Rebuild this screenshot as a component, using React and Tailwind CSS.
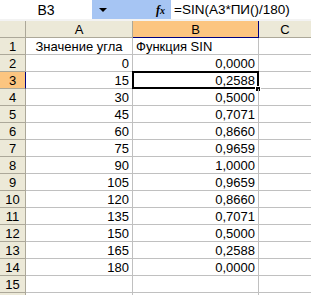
import React from "react";

const rows = [
  ["Значение угла", "Функция SIN", "text"],
  ["0", "0,0000"],
  ["15", "0,2588"],
  ["30", "0,5000"],
  ["45", "0,7071"],
  ["60", "0,8660"],
  ["75", "0,9659"],
  ["90", "1,0000"],
  ["105", "0,9659"],
  ["120", "0,8660"],
  ["135", "0,7071"],
  ["150", "0,5000"],
  ["165", "0,2588"],
  ["180", "0,0000"],
  ["", ""],
];

export default function App() {
  return (
    <div
      className="w-[311px] h-[295px] overflow-hidden bg-white text-[13px] leading-none text-black"
      style={{ fontFamily: '"Liberation Sans", Arial, sans-serif' }}
    >
      {/* FORMULA BAR */}
      <div className="flex h-[19px]">
        <div className="w-[92px] bg-white flex items-center justify-center text-[14px]">B3</div>
        <div className="w-[79px] bg-[#a6c5f3] flex items-center">
          <span className="ml-[7px] w-0 h-0 border-l-[4px] border-r-[4px] border-t-[4px] border-l-transparent border-r-transparent border-t-black" />
          <span className="ml-auto mr-[6px] italic font-bold text-[12px]" style={{ fontFamily: '"Liberation Serif", serif' }}>
            f<span className="text-[10px]">x</span>
          </span>
        </div>
        <div className="flex-1 bg-white flex items-center pl-[3px] text-[13.5px]">=SIN(A3*ПИ()/180)</div>
      </div>
      <div className="h-[2px] bg-[#f3f3f3]" />

      {/* COLUMN HEADERS */}
      <div className="flex h-[17px] border-b border-[#aca899]">
        <div className="w-[26px] bg-[#ece9d8] border-r border-[#aca899]" />
        <div className="w-[107px] bg-[#ece9d8] border-r border-[#aca899] flex items-center justify-center">A</div>
        <div className="w-[126px] bg-[#fcc580] border-r border-[#000080] border-b border-b-[#000080] -mb-px flex items-center justify-center">B</div>
        <div className="flex-1 bg-[#ece9d8] flex items-center justify-center">C</div>
      </div>

      {/* ROWS */}
      {rows.map((r, i) => {
        const sel = i === 2;
        return (
          <div key={i} className="flex h-[17px]">
            <div
              className={
                "w-[26px] border-b border-[#aca899] flex items-center justify-center " +
                (sel ? "bg-[#fcc580] border-r border-r-[#000080]" : "bg-[#ece9d8] border-r border-r-[#aca899]")
              }
            >
              {i + 1}
            </div>
            <div
              className={
                "w-[107px] border-r border-b border-[#c0c0c0] flex items-center px-[3px] " +
                (r[2] ? "justify-center" : "justify-end")
              }
            >
              {r[0]}
            </div>
            <div
              className={
                "relative w-[126px] border-r border-b border-[#c0c0c0] flex items-center px-[3px] " +
                (r[2] ? "justify-start" : "justify-end")
              }
            >
              {r[1]}
              {sel && (
                <>
                  <div className="absolute -left-[1px] -top-[1px] -right-[1px] -bottom-[1px] border-2 border-black" />
                  <div className="absolute -right-[3px] -bottom-[4px] w-[6px] h-[6px] bg-black border border-white" />
                </>
              )}
            </div>
            <div className="flex-1 border-b border-[#c0c0c0]" />
          </div>
        );
      })}
      {/* partial next row */}
      <div className="flex h-[17px]">
        <div className="w-[26px] bg-[#ece9d8] border-r border-[#aca899]" />
        <div className="w-[107px] border-r border-[#c0c0c0]" />
        <div className="w-[126px] border-r border-[#c0c0c0]" />
        <div className="flex-1" />
      </div>
    </div>
  );
}
